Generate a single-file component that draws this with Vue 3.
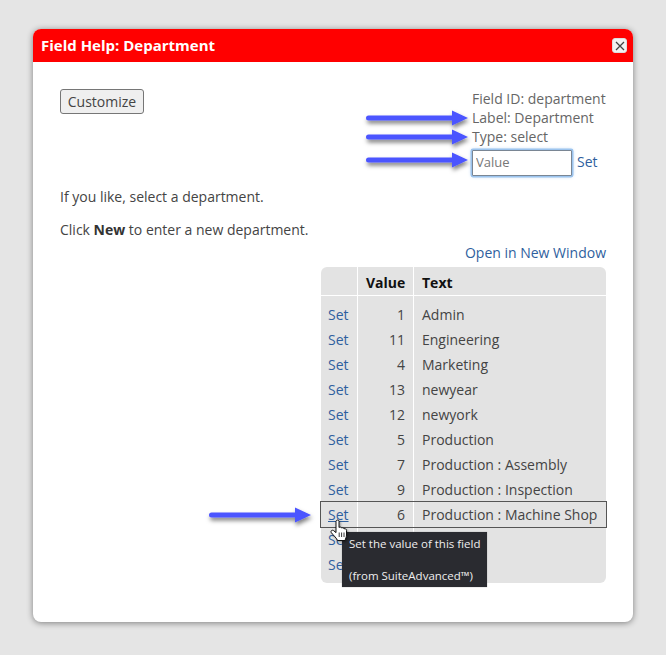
<script setup>
const rows = [
  ['1', 'Admin'],
  ['11', 'Engineering'],
  ['4', 'Marketing'],
  ['13', 'newyear'],
  ['12', 'newyork'],
  ['5', 'Production'],
  ['7', 'Production : Assembly'],
  ['9', 'Production : Inspection'],
  ['6', 'Production : Machine Shop', true],
  ['', ''],
  ['', ''],
]
const arrows = [
  { x: 366, y: 118 },
  { x: 366, y: 137 },
  { x: 366, y: 160 },
  { x: 209, y: 515 },
]
</script>

<template>
  <div class="page">
    <section class="dialog">
      <header class="titlebar">
        <span class="title">Field Help: Department</span>
        <button class="close" aria-label="Close">
          <svg width="10" height="10" viewBox="0 0 10 10"><path d="M1 1 L9 9 M9 1 L1 9" stroke="#444" stroke-width="1.3" fill="none"/></svg>
        </button>
      </header>
      <div class="body">
        <div class="top">
          <button class="customize">Customize</button>
          <div class="info">
            <div>Field ID: department</div>
            <div>Label: Department</div>
            <div>Type: select</div>
            <div class="valuerow">
              <input class="value" placeholder="Value" />
              <a class="link">Set</a>
            </div>
          </div>
        </div>
        <p class="p1">If you like, select a department.</p>
        <p class="p2">Click <b>New</b> to enter a new department.</p>
        <div class="openrow"><a class="link">Open in New Window</a></div>
        <div class="tablewrap">
          <table class="grid">
            <thead>
              <tr><th class="c1"></th><th class="c2">Value</th><th class="c3">Text</th></tr>
            </thead>
            <tbody>
              <tr v-for="(r, i) in rows" :key="i" :class="{ hot: r[2] }">
                <td class="c1"><a class="link" :class="{ under: r[2] }">Set</a></td>
                <td class="c2">{{ r[0] }}</td>
                <td class="c3">{{ r[1] }}</td>
              </tr>
            </tbody>
          </table>
        </div>
      </div>
    </section>

    <svg v-for="(a, i) in arrows" :key="'a' + i" class="arrow" :style="{ left: a.x - 6 + 'px', top: a.y - 14 + 'px' }" width="122" height="34" viewBox="0 0 122 34">
      <defs>
        <filter :id="'s' + i" x="-10%" y="-40%" width="120%" height="200%">
          <feDropShadow dx="1" dy="3" stdDeviation="2" flood-color="#000" flood-opacity="0.5"/>
        </filter>
      </defs>
      <path d="M8.5 11.5 H92 V6.5 L108 14 L92 21.5 V16.5 H8.5 A2.5 2.5 0 0 1 8.5 11.5 Z" fill="#4c54ff" :filter="'url(#s' + i + ')'"/>
    </svg>

    <div class="tooltip">
      <div>Set the value of this field</div>
      <div>(from SuiteAdvanced™)</div>
    </div>

    <svg class="hand" width="18" height="23" viewBox="0 0 18 23">
      <path d="M6 2.5 C6 .6 9 .6 9 2.5 V8.5 C10 7.8 11.2 8 11.6 9 C12.6 8.4 13.8 8.8 14 9.8 C15.2 9.4 16.5 10 16.5 11.4 V16 C16.5 18 15.6 19.5 15 21.5 H7.5 C7 19.5 3.5 16.5 1.3 13.6 C.3 12.2 2 10.5 3.4 11.5 L6 13.6 Z" fill="#fff" stroke="#111" stroke-width="1" stroke-linejoin="round"/>
      <path d="M9.2 13.5 V18 M11.6 13.5 V18 M14 13.5 V18" stroke="#222" stroke-width=".9"/>
    </svg>
  </div>
</template>

<style scoped>
.page {
  position: relative;
  width: 666px;
  height: 655px;
  padding: 29px 33px 0;
  box-sizing: border-box;
  background: #e5e5e5;
  font-family: "Open Sans", sans-serif;
  font-size: 14px;
  color: #444;
  overflow: hidden;
}
.dialog {
  width: 600px;
  height: 593px;
  background: #fff;
  border-radius: 8px;
  box-shadow: 0 1px 6px rgba(0, 0, 0, 0.45);
  overflow: hidden;
}
.titlebar {
  height: 33px;
  background: #ff0000;
  color: #fff;
  font-weight: 700;
  font-size: 15px;
  padding: 0 6px 0 8px;
  display: flex;
  align-items: center;
  justify-content: space-between;
}
.title {
  margin-top: -2px;
}
.close {
  width: 15px;
  height: 15px;
  padding: 0;
  border: 1px solid #ddd;
  border-radius: 3px;
  background: #f2f2f2;
  display: flex;
  align-items: center;
  justify-content: center;
}
.body {
  padding: 27px 27px 0;
}
.top {
  display: flex;
  justify-content: space-between;
  align-items: flex-start;
}
.customize {
  width: 84px;
  height: 25px;
  padding: 0;
  font: inherit;
  color: #444;
  background: #efefef;
  border: 1px solid #767676;
  border-radius: 3px;
}
.info {
  width: 134px;
  color: #666;
  line-height: 19px;
  white-space: nowrap;
}
.valuerow {
  display: flex;
  align-items: center;
  gap: 5px;
  margin-top: 4px;
}
.value {
  width: 100px;
  height: 26px;
  box-sizing: border-box;
  padding: 0 3px 2px;
  font: inherit;
  font-size: 13px;
  border: 1px solid #7a8694;
  border-radius: 1px;
  box-shadow: 0 0 0 1.5px #9cc4ee, 0 0 4px #9cc4ee;
  outline: none;
  color: #444;
}
.value::placeholder {
  color: #777;
  opacity: 1;
}
.valuerow .link {
  position: relative;
  top: -2px;
}
.link {
  color: #2f5f9e;
}
.under {
  text-decoration: underline;
}
p {
  margin: 0;
  line-height: 19px;
}
.p1 {
  margin-top: 11px;
}
.p2 {
  margin-top: 14px;
}
.p2 b {
  color: #333;
}
.openrow {
  margin-top: 4px;
  text-align: right;
  line-height: 19px;
}
.tablewrap {
  margin-top: 5px;
  margin-left: 261px;
  width: 285px;
  height: 316px;
  background: #e3e3e3;
  border-radius: 6px;
}
.grid {
  width: 285px;
  border-collapse: separate;
  border-spacing: 0;
  table-layout: fixed;
}
.grid th {
  height: 29px;
  padding: 3px 8px 0;
  font-weight: 700;
  color: #111;
  border-bottom: 1px solid #fff;
  text-align: left;
  box-sizing: border-box;
}
.grid td {
  height: 25px;
  padding: 0 8px 0 7px;
  white-space: nowrap;
  box-sizing: border-box;
}
.grid tbody tr:first-child td {
  height: 31px;
  padding-top: 6px;
}
.c1 {
  width: 37px;
  border-right: 1px solid #fff;
  box-sizing: border-box;
}
.grid td.c1 {
  padding-right: 0;
}
.c2 {
  width: 56px;
  border-right: 1px solid #fff;
  text-align: right;
  box-sizing: border-box;
}
.grid th.c2 {
  text-align: right;
}
.grid td.c2 {
  padding-right: 8px;
}
.grid td.c3,
.grid th.c3 {
  padding-left: 8px;
  padding-right: 0;
}
.hot {
  outline: 1px solid #555;
}
.arrow {
  position: absolute;
  overflow: visible;
}
.tooltip {
  position: absolute;
  left: 342px;
  top: 532px;
  width: 145px;
  height: 55px;
  box-sizing: border-box;
  padding: 3px 7px;
  background: #2a2b30;
  color: #eee;
  font-size: 11.5px;
  line-height: 17px;
  display: flex;
  flex-direction: column;
  gap: 15px;
  white-space: nowrap;
  box-shadow: 0 0 1px #999;
}
.hand {
  position: absolute;
  left: 330px;
  top: 519px;
  filter: drop-shadow(1px 1px 1px rgba(0,0,0,.4));
}
</style>
